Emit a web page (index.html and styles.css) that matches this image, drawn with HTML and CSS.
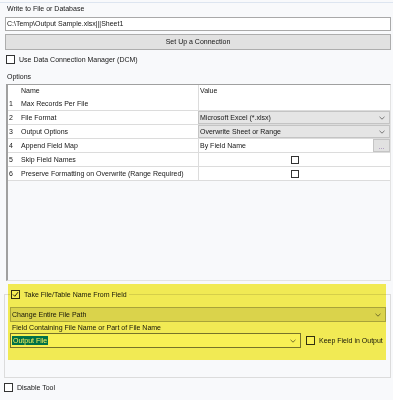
FILE: index.html
```html
<!DOCTYPE html>
<html lang="en">
<head>
  <meta charset="UTF-8">
  <meta name="viewport" content="width=device-width, initial-scale=1.0">
  <title>Write to File or Database</title>
  <link rel="stylesheet" href="styles.css">
</head>
<body>
  <div class="panel">
    <div class="caption">Write to File or Database</div>
    <div class="textbox">C:\Temp\Output Sample.xlsx|||Sheet1</div>
    <div class="button">Set Up a Connection</div>
    <div class="check"><span class="box"></span>Use Data Connection Manager (DCM)</div>

    <div class="caption options">Options</div>
    <div class="grid">
      <div class="row head">
        <span class="num"></span><span class="name">Name</span><span class="value">Value</span>
      </div>
      <div class="row">
        <span class="num">1</span><span class="name">Max Records Per File</span><span class="value"></span>
      </div>
      <div class="row">
        <span class="num">2</span><span class="name">File Format</span>
        <span class="value"><span class="combo cell">Microsoft Excel (*.xlsx)<svg class="chev" viewBox="0 0 6 4"><polyline points="0.5,0.8 3,3.2 5.5,0.8"/></svg></span></span>
      </div>
      <div class="row">
        <span class="num">3</span><span class="name">Output Options</span>
        <span class="value"><span class="combo cell">Overwrite Sheet or Range<svg class="chev" viewBox="0 0 6 4"><polyline points="0.5,0.8 3,3.2 5.5,0.8"/></svg></span></span>
      </div>
      <div class="row">
        <span class="num">4</span><span class="name">Append Field Map</span>
        <span class="value">By Field Name<span class="more">...</span></span>
      </div>
      <div class="row">
        <span class="num">5</span><span class="name">Skip Field Names</span>
        <span class="value center"><span class="box small"></span></span>
      </div>
      <div class="row">
        <span class="num">6</span><span class="name">Preserve Formatting on Overwrite (Range Required)</span>
        <span class="value center"><span class="box small"></span></span>
      </div>
    </div>

    <div class="group-wrap">
      <fieldset class="group">
        <legend class="legend">
          <span class="box"><svg viewBox="0 0 7 7"><polyline points="1,3.5 2.8,5.3 6,1.2"/></svg></span>Take File/Table Name From Field
        </legend>
        <div class="combo wide">Change Entire File Path<svg class="chev" viewBox="0 0 6 4"><polyline points="0.5,0.8 3,3.2 5.5,0.8"/></svg></div>
        <div class="caption field-label">Field Containing File Name or Part of File Name</div>
        <div class="field-row">
          <div class="combo edit"><span class="selected">Output File</span><svg class="chev" viewBox="0 0 6 4"><polyline points="0.5,0.8 3,3.2 5.5,0.8"/></svg></div>
          <div class="check keep"><span class="box"></span>Keep Field in Output</div>
        </div>
      </fieldset>
      <div class="highlight"></div>
    </div>

    <div class="check disable"><span class="box"></span>Disable Tool</div>
  </div>
</body>
</html>
```

FILE: styles.css
```css
body {
  margin: 0;
  padding-top: 2px;
  background: #f8f9fb;
  font-family: "Liberation Sans", Arial, sans-serif;
  font-size: 7px;
  color: #161616;
}
.panel {
  border-top: 1px solid #dde5f0;
  padding: 0 2px 0 5px;
}
.caption {
  line-height: 11px;
  padding-left: 2px;
  white-space: nowrap;
}
.textbox {
  margin-top: 3px;
  height: 12px;
  line-height: 12px;
  padding-left: 1px;
  border: 1px solid #a9a9a9;
  background: #fff;
}
.button {
  margin-top: 3px;
  height: 14px;
  line-height: 14px;
  border: 1px solid #adadad;
  background: #e1e1e1;
  text-align: center;
}
.check {
  display: flex;
  align-items: center;
  height: 11px;
  margin-top: 4px;
  white-space: nowrap;
}
.box {
  display: inline-flex;
  flex: none;
  width: 7px;
  height: 7px;
  margin: 0 4px 0 1px;
  border: 1px solid #333;
  background: #fff;
}
.box svg {
  width: 7px;
  height: 7px;
  fill: none;
  stroke: #222;
  stroke-width: 1;
}
.box.small {
  width: 6px;
  height: 6px;
  margin: 0;
}
.options {
  margin-top: 6px;
}

/* options grid */
.grid {
  margin: 2px 0 0 1px;
  height: 195px;
  border: 1px solid;
  border-left-width: 2px;
  border-color: #a0a0a0 #e3e3e3 #e3e3e3 #a0a0a0;
  background: #f8f9fb;
}
.row {
  display: grid;
  grid-template-columns: 13px 178px 1fr;
  height: 14px;
  box-sizing: border-box;
  border-bottom: 1px solid #dcdcdc;
  background: #fff;
  line-height: 13px;
  white-space: nowrap;
}
.row.head {
  height: 12px;
  line-height: 12px;
  border-bottom: none;
}
.num {
  padding-left: 1px;
}
.name {
  border-right: 1px solid #dcdcdc;
  overflow: hidden;
}
.value {
  display: flex;
  align-items: center;
  padding-left: 1px;
}
.value.center {
  justify-content: center;
  padding-left: 0;
}
.combo {
  display: flex;
  align-items: center;
  justify-content: space-between;
  box-sizing: border-box;
  border: 1px solid #adadad;
  background: #e1e1e1;
  padding: 0 4px 0 1px;
  white-space: nowrap;
}
.combo.cell {
  flex: 1;
  height: 13px;
  margin-left: -2px;
  background: #e5e5e5;
  border-color: #c4c4c4;
}
.chev {
  width: 6px;
  height: 4px;
  fill: none;
  stroke: #6a6a6a;
  stroke-width: 0.9;
}
.more {
  margin-left: auto;
  width: 15px;
  height: 11px;
  line-height: 13px;
  border: 1px solid #c4c4c4;
  background: #e1e1e1;
  color: #8a6aa8;
  text-align: center;
}

/* file name from field group */
.group-wrap {
  position: relative;
  margin: 8px 0 0 -1px;
}
.group {
  margin: 0;
  padding: 7px 4px 29px 5px;
  border: 1px solid #dcdcdc;
  min-width: 0;
}
.legend {
  display: flex;
  align-items: center;
  height: 11px;
  padding: 0 2px 0 0;
  white-space: nowrap;
}
.combo.wide {
  height: 15px;
}
.field-label {
  line-height: 11px;
}
.field-row {
  display: flex;
  align-items: center;
}
.combo.edit {
  width: 291px;
  height: 15px;
  background: #fff;
  border-color: #7a7a7a;
  padding-left: 1px;
}
.selected {
  line-height: 9px;
  padding: 0 1px;
  background: #0078d7;
  color: #fff;
}
.check.keep {
  margin: 0 0 0 4px;
}
.highlight {
  position: absolute;
  left: 4px;
  top: -5px;
  width: 378px;
  height: 76px;
  background: #f8f055;
  mix-blend-mode: multiply;
  pointer-events: none;
}
.check.disable {
  margin: 4px 0 0 -2px;
}
```
